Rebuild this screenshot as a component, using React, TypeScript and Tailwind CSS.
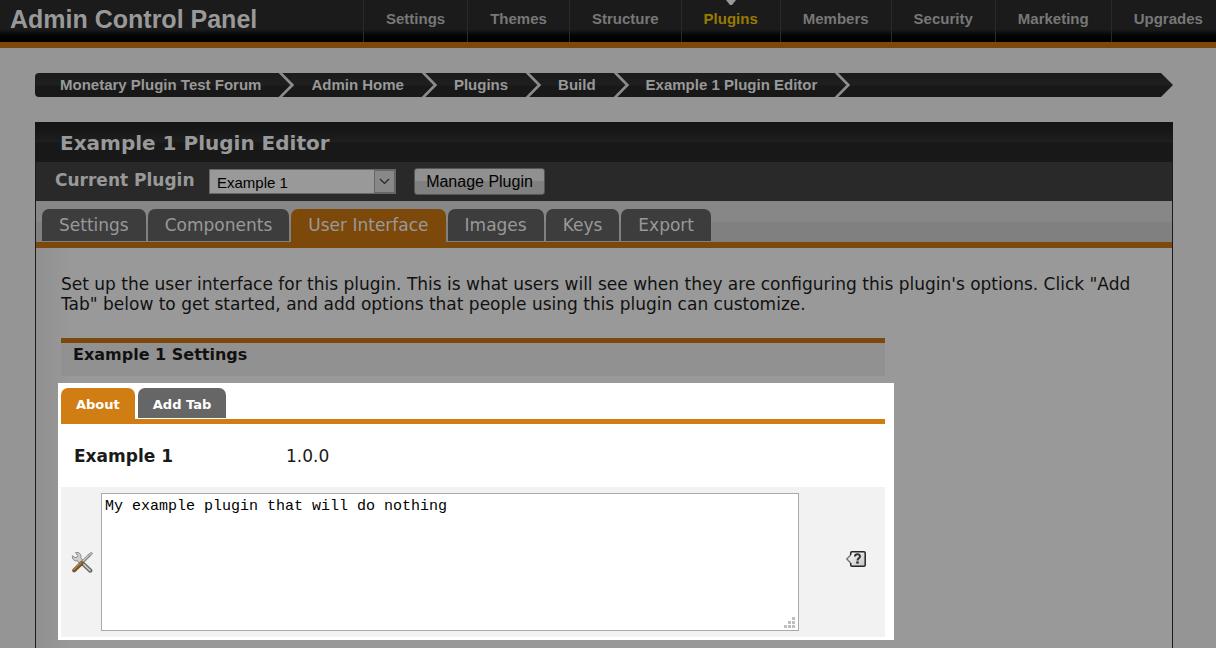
import React from "react";

const navItems = [
  "Settings",
  "Themes",
  "Structure",
  "Plugins",
  "Members",
  "Security",
  "Marketing",
  "Upgrades",
];

const crumbs = [
  "Monetary Plugin Test Forum",
  "Admin Home",
  "Plugins",
  "Build",
  "Example 1 Plugin Editor",
];

const editorTabs = [
  "Settings",
  "Components",
  "User Interface",
  "Images",
  "Keys",
  "Export",
];

function TopBar() {
  return (
    <header className="flex h-12 shrink-0 overflow-hidden border-b-6 border-[#7c490b] bg-linear-to-b from-[#1b1b1b] from-70% to-black font-['Liberation_Sans',Arial,sans-serif] font-bold">
      <h1 className="w-[363px] shrink-0 pl-[10px] text-[25px] leading-[38px] text-[#999]">
        Admin Control Panel
      </h1>
      <nav className="flex">
        {navItems.map((item) => {
          const active = item === "Plugins";
          return (
            <a
              key={item}
              href="#"
              className={`relative shrink-0 border-l border-[#2a2a2a] px-[22px] text-[15px] leading-[38px] ${
                active ? "text-[#997a00]" : "text-[#777]"
              }`}
            >
              {item}
              {active && (
                <svg
                  className="absolute top-0 left-1/2 -translate-x-1/2"
                  width="10"
                  height="5"
                  viewBox="0 0 10 5"
                  aria-hidden="true"
                >
                  <path d="M0 0H10L6 5H4Z" fill="#999" />
                </svg>
              )}
            </a>
          );
        })}
      </nav>
    </header>
  );
}

function Breadcrumbs() {
  return (
    <nav
      aria-label="Breadcrumb"
      className="mr-[43px] ml-[35px] flex h-6 rounded-l-[4px] bg-linear-to-b from-[#1b1b1b] from-0% via-[#1f1f1f] via-50% to-[#181818] to-55% pl-[25px] font-['Liberation_Sans',Arial,sans-serif] text-[15px] leading-6 font-bold text-[#999] [clip-path:polygon(0_0,calc(100%_-_12px)_0,100%_50%,calc(100%_-_12px)_100%,0_100%)]"
    >
      {crumbs.map((crumb) => (
        <React.Fragment key={crumb}>
          <a href="#" className="shrink-0">
            {crumb}
          </a>
          <svg
            className="mx-[17px] shrink-0"
            width="16"
            height="24"
            viewBox="0 0 16 24"
            fill="none"
            aria-hidden="true"
          >
            <path d="M1.5 -1L14.3 12L1.5 25" stroke="#8c8c8c" strokeWidth="2.6" />
          </svg>
        </React.Fragment>
      ))}
    </nav>
  );
}

function ToolsIcon() {
  return (
    <svg width="22" height="22" viewBox="0 0 22 22" aria-hidden="true">
      <path d="M9 10L19.3 19.6" stroke="#666" strokeWidth="4.2" strokeLinecap="round" />
      <path d="M8 9L19 19.4" stroke="#c4c4c4" strokeWidth="1.8" strokeLinecap="round" />
      <path
        d="M4.6 1.6L6.8 4.4L5.8 6.4L3.6 6.4L1.4 4.8C1 7.8 3 10.2 6.2 9.8L8.6 12L11.6 9L9.8 6.8C10.6 3.2 8 .8 4.6 1.6Z"
        fill="#cfcfcf"
        stroke="#858585"
        strokeWidth="1"
      />
      <path d="M11 11.4L19 3.6" stroke="#858585" strokeWidth="3" />
      <path d="M11 10.8L19 3.2" stroke="#d4d4d4" strokeWidth="1.1" />
      <path d="M17.4 3.6L20 1.4L21.4 2L21 3.4L18.8 5Z" fill="#c2c2c2" stroke="#858585" strokeWidth=".8" />
      <path d="M3.2 19.4L10.6 12.2" stroke="#70522b" strokeWidth="4" strokeLinecap="round" />
      <path d="M2.8 18.6L10 11.8" stroke="#ab7c3d" strokeWidth="1.8" strokeLinecap="round" />
    </svg>
  );
}

function HelpIcon() {
  return (
    <svg width="20" height="16" viewBox="0 0 20 16" aria-hidden="true">
      <defs>
        <linearGradient id="help-fill" x1="0" y1="0" x2="1" y2="1">
          <stop offset="0" stopColor="#fff" />
          <stop offset="1" stopColor="#c2c2c2" />
        </linearGradient>
      </defs>
      <path
        d="M4.7 4L.8 8L4.7 12V14Q4.7 15.2 6 15.2H18Q19.2 15.2 19.2 14V2Q19.2 .8 18 .8H6Q4.7 .8 4.7 2Z"
        fill="url(#help-fill)"
      />
      <path d="M4.7 4L.8 8L4.7 12" fill="none" stroke="#777" strokeWidth="1.4" />
      <path
        d="M4.7 4V2Q4.7 .8 6 .8H18Q19.2 .8 19.2 2V14Q19.2 15.2 18 15.2H6Q4.7 15.2 4.7 14V12"
        fill="none"
        stroke="#262626"
        strokeWidth="1.5"
      />
      <path
        d="M9 5.4C9 2.6 14 2.6 14 5.3C14 7.3 11.5 7.2 11.5 9.4"
        fill="none"
        stroke="#333"
        strokeWidth="2"
      />
      <rect x="10.2" y="10.4" width="2.6" height="2.2" fill="#333" />
    </svg>
  );
}

function PluginPicker() {
  return (
    <div className="flex h-[39px] items-start bg-[#292929] pl-[19px]">
      <label
        htmlFor="plugin"
        className="w-[154px] shrink-0 text-[17px] leading-9 font-bold text-[#999]"
      >
        Current Plugin
      </label>
      <div className="relative mt-[7px] h-[25px] w-[187px] font-['Liberation_Sans',Arial,sans-serif]">
        <select
          id="plugin"
          defaultValue="Example 1"
          className="block h-full w-full appearance-none border border-[#666] bg-[#999] pt-[2px] pl-[7px] text-[15px] leading-5 text-black"
        >
          <option>Example 1</option>
        </select>
        <span className="pointer-events-none absolute top-px right-px flex h-[23px] w-[21px] items-center justify-center border border-[#666] bg-[#888]">
          <svg width="11" height="7" viewBox="0 0 11 7" fill="none" aria-hidden="true">
            <path d="M1 1L5.5 5.5L10 1" stroke="#222" strokeWidth="1.1" />
          </svg>
        </span>
      </div>
      <button
        type="button"
        className="mt-[6px] ml-[18px] h-[27px] w-[131px] rounded-[3px] border border-[#555] bg-linear-to-b from-[#909090] from-50% to-[#808080] to-50% font-['Liberation_Sans',Arial,sans-serif] text-[16px] leading-6 text-black"
      >
        Manage Plugin
      </button>
    </div>
  );
}

function EditorTabs() {
  return (
    <div className="border-b-6 border-[#7c490b] bg-linear-to-b from-[#878787] from-50% to-[#808080] to-50%">
      <div className="flex h-[41px] items-start gap-[2px] pt-2 pl-[6px]">
        {editorTabs.map((tab) =>
          tab === "User Interface" ? (
            <a
              key={tab}
              href="#"
              className="h-[33px] rounded-t-[7px] bg-[#7c490b] px-[17px] text-[17px] leading-[33px] text-[#999]"
            >
              {tab}
            </a>
          ) : (
            <a
              key={tab}
              href="#"
              className="h-8 rounded-t-[7px] bg-[#3d3d3d] px-[17px] text-[17px] leading-[33px] text-[#999]"
            >
              {tab}
            </a>
          ),
        )}
      </div>
    </div>
  );
}

function OptionsCard() {
  return (
    <div className="mt-[7px] max-w-[836px] bg-white pt-[5px] pr-[9px] pb-[3px] pl-[3px]">
      <div className="flex h-9 items-start gap-[3px] border-b-5 border-[#d07e14] text-[13px] leading-[33px] font-bold text-white">
        <a href="#" className="h-[31px] rounded-t-[7px] bg-[#d07e14] px-[15px]">
          About
        </a>
        <a href="#" className="h-[30px] rounded-t-[7px] bg-[#666] px-[15px]">
          Add Tab
        </a>
      </div>
      <div className="flex h-[63px] items-center pt-[2px] pl-[13px] text-[17px] text-[#1a1a1a]">
        <span className="w-[212px] font-bold">Example 1</span>
        <span>1.0.0</span>
      </div>
      <div className="flex items-center bg-[#f2f2f2] py-[6px] pr-[19px] pl-[10px]">
        <ToolsIcon />
        <div className="relative ml-2 min-w-0 flex-1">
          <textarea
            aria-label="Description"
            defaultValue="My example plugin that will do nothing"
            className="block h-[138px] w-full resize-none border border-[#a9a9a9] bg-white px-[3px] py-1 font-['Liberation_Mono','Courier_New',monospace] text-[15px] leading-[18px] text-black"
          />
          <svg
            className="pointer-events-none absolute right-[3px] bottom-[3px]"
            width="12"
            height="11"
            viewBox="0 0 12 11"
            fill="#bfbfbf"
            aria-hidden="true"
          >
            <path d="M8 0h3v3h-3zM4 4h3v3h-3zM8 4h3v3h-3zM0 8h3v3h-3zM4 8h3v3h-3zM8 8h3v3h-3z" />
          </svg>
        </div>
        <button type="button" aria-label="Help" className="mb-[6px] ml-[47px]">
          <HelpIcon />
        </button>
      </div>
    </div>
  );
}

export default function App() {
  return (
    <div className="flex min-h-screen flex-col bg-[#959595] font-['DejaVu_Sans',Verdana,sans-serif]">
      <TopBar />
      <div className="h-[25px] shrink-0" />
      <Breadcrumbs />
      <main className="mt-[25px] mr-[43px] ml-[35px] flex flex-1 flex-col">
        <h2 className="h-10 bg-linear-to-b from-[#131313] from-0% via-[#1e1e1e] via-50% to-[#181818] to-52% pl-[25px] text-[20px] leading-[42px] font-bold text-[#999]">
          Example 1 Plugin Editor
        </h2>
        <div className="flex flex-1 flex-col border-x border-[#1c1c1c]">
          <PluginPicker />
          <EditorTabs />
          <section className="flex-1 bg-linear-to-r from-[#909090] via-[#999] via-3% to-[#999] to-97% px-[22px] pt-[26px] pb-2">
            <p className="px-[3px] text-[17px] leading-5 text-[#111]">
              Set up the user interface for this plugin. This is what users will see when they are
              configuring this plugin's options. Click "Add Tab" below to get started, and add
              options that people using this plugin can customize.
            </p>
            <h3 className="mt-6 mr-[9px] ml-[3px] h-[38px] max-w-[824px] border-t-5 border-[#7c490b] bg-[#919191] pl-3 text-[16px] leading-6 font-bold text-[#111]">
              Example 1 Settings
            </h3>
            <OptionsCard />
          </section>
        </div>
      </main>
    </div>
  );
}
